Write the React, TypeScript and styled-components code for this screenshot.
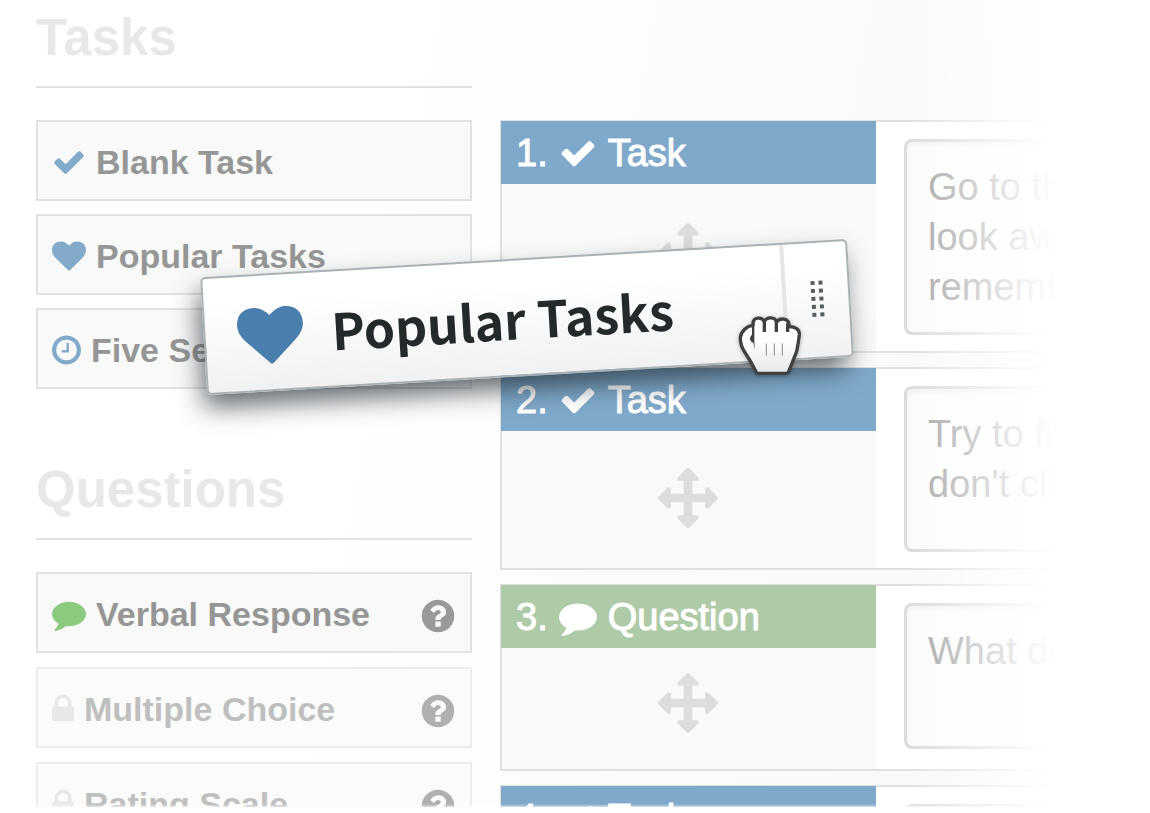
import React from "react";
import styled, { createGlobalStyle, css } from "styled-components";

const GlobalStyle = createGlobalStyle`
  *, *::before, *::after { box-sizing: border-box; }
  body {
    margin: 0;
    background: #fff;
    font-family: "Liberation Sans", Arial, Helvetica, sans-serif;
  }
  button, textarea { font: inherit; margin: 0; }
`;

/* ---------- icons ---------- */

type Glyph = { box: string; ratio: number; d: string };

const glyphs = {
  check: {
    box: "0 0 1792 1792",
    ratio: 1,
    d: "M1671 566q0 40-28 68l-724 724-136 136q-28 28-68 28t-68-28l-136-136-362-362q-28-28-28-68t28-68l136-136q28-28 68-28t68 28l294 295 656-657q28-28 68-28t68 28l136 136q28 28 28 68z",
  },
  heart: {
    box: "0 0 1792 1792",
    ratio: 1,
    d: "M896 1664q-26 0-44-18l-624-602q-10-8-27.5-26t-55.5-65.5-68-97.5-53.5-121-23.5-138q0-220 127-344t351-124q62 0 126.5 21.5t120 58 95.5 68.5 76 68q36-36 76-68t95.5-68.5 120-58 126.5-21.5q224 0 351 124t127 344q0 221-229 450l-623 600q-18 18-44 18z",
  },
  clock: {
    box: "128 0 1536 1792",
    ratio: 0.857,
    d: "M1024 544v448q0 14-9 23t-23 9h-320q-14 0-23-9t-9-23v-64q0-14 9-23t23-9h224v-352q0-14 9-23t23-9h64q14 0 23 9t9 23zm416 352q0-148-73-273t-198-198-273-73-273 73-198 198-73 273 73 273 198 198 273 73 273-73 198-198 73-273zm224 0q0 209-103 385.5t-279.5 279.5-385.5 103-385.5-103-279.5-279.5-103-385.5 103-385.5 279.5-279.5 385.5-103 385.5 103 279.5 279.5 103 385.5z",
  },
  comment: {
    box: "0 0 1792 1792",
    ratio: 1,
    d: "M1792 896q0 174-120 321.5t-326 233-450 85.5q-70 0-145-8-198 175-460 242-49 14-114 22-17 2-30.5-9t-17.5-29v-1q-3-4-.5-12t2-10 4.5-9.5l6-9 7-8.5 8-9q7-8 31-34.5t34.5-38 31-39.5 32.5-51 27-59 26-76q-157-89-247.5-220t-90.5-281q0-130 71-248.5t191-204.5 286-136.5 348-50.5q244 0 450 85.5t326 233 120 321.5z",
  },
  lock: {
    box: "320 0 1152 1792",
    ratio: 0.643,
    d: "M640 768h512v-192q0-106-75-181t-181-75-181 75-75 181v192zm832 96v576q0 40-28 68t-68 28h-960q-40 0-68-28t-28-68v-576q0-40 28-68t68-28h32v-192q0-184 132-316t316-132 316 132 132 316v192h32q40 0 68 28t28 68z",
  },
  help: {
    box: "0 0 1792 1792",
    ratio: 1,
    d: "M1024 1376v-192q0-14-9-23t-23-9h-192q-14 0-23 9t-9 23v192q0 14 9 23t23 9h192q14 0 23-9t9-23zm256-672q0-88-55.5-163t-138.5-116-170-41q-243 0-371 213-15 24 8 42l132 100q7 6 19 6 16 0 25-12 53-68 86-92 34-24 86-24 48 0 85.5 26t37.5 59q0 38-20 61t-68 45q-63 28-115.5 86.5t-52.5 125.5v36q0 14 9 23t23 9h192q14 0 23-9t9-23q0-19 21.5-49.5t54.5-49.5q32-18 49-28.5t46-35 44.5-48 28-60.5 12.5-81zm384 192q0 209-103 385.5t-279.5 279.5-385.5 103-385.5-103-279.5-279.5-103-385.5 103-385.5 279.5-279.5 385.5-103 385.5 103 279.5 279.5 103 385.5z",
  },
  move: {
    box: "0 0 1792 1792",
    ratio: 1,
    d: "M1792 896q0 26-19 45l-256 256q-19 19-45 19t-45-19-19-45v-128h-384v384h128q26 0 45 19t19 45-19 45l-256 256q-19 19-45 19t-45-19l-256-256q-19-19-19-45t19-45 45-19h128v-384h-384v128q0 26-19 45t-45 19-45-19l-256-256q-19-19-19-45t19-45l256-256q19-19 45-19t45 19 19 45v128h384v-384h-128q-26 0-45-19t-19-45 19-45l256-256q19-19 45-19t45 19l256 256q19 19 19 45t-19 45-45 19h-128v384h384v-128q0-26 19-45t45-19 45 19l256 256q19 19 19 45z",
  },
} satisfies Record<string, Glyph>;

type IconName = keyof typeof glyphs;

const IconSvg = styled.svg`
  display: block;
  flex: none;
  fill: currentColor;
`;

function Icon({ name, size }: { name: IconName; size: number }) {
  const g = glyphs[name];
  return (
    <IconSvg viewBox={g.box} width={Math.round(size * g.ratio)} height={size} aria-hidden="true">
      <path d={g.d} />
    </IconSvg>
  );
}

/* ---------- page ---------- */

const Stage = styled.main`
  position: relative;
  height: calc(100vh - 6px);
  overflow: hidden;
  background: linear-gradient(100deg, #fff 30%, #f8f8f8 88%);
`;

const Columns = styled.div`
  display: grid;
  grid-template-columns: 436px 1fr;
  gap: 28px;
  padding-left: 36px;
`;

const Fade = styled.div`
  position: absolute;
  inset: 0;
  pointer-events: none;
  background:
    linear-gradient(to top, rgba(255, 255, 255, 0.6), transparent 3px),
    linear-gradient(
      to right,
      transparent 79%,
      rgba(255, 255, 255, 0.6) 86%,
      rgba(255, 255, 255, 0.9) 90%,
      #fff 92%
    );
`;

/* ---------- sidebar ---------- */

const Sidebar = styled.aside`
  display: flex;
  flex-direction: column;
  gap: 71px;
  padding-top: 8px;
`;

const Heading = styled.h2`
  margin: 0 0 32px;
  padding-bottom: 18px;
  border-bottom: 2px solid #e2e2e2;
  font-size: 51px;
  line-height: 60px;
  font-weight: 700;
  color: #e8e8e8;
`;

const ItemList = styled.ul<{ $gap: number }>`
  display: flex;
  flex-direction: column;
  gap: ${(p) => p.$gap}px;
  margin: 0;
  padding: 0;
  list-style: none;
`;

const Item = styled.li<{ $locked?: boolean }>`
  display: flex;
  align-items: center;
  height: 81px;
  padding: 3px 13px 0 14px;
  border: 2px solid #e2e2e2;
  background: #f9f9f9;
  color: #969696;
  ${(p) =>
    p.$locked &&
    css`
      border-color: #ececec;
      background: #fbfbfb;
      color: #bfbfbf;
    `}
`;

const ItemButton = styled.button<{ $tint: string }>`
  flex: 1;
  display: flex;
  align-items: center;
  gap: 10px;
  padding: 0;
  border: 0;
  background: none;
  color: inherit;
  font-size: 34px;
  line-height: 40px;
  font-weight: 700;
  white-space: nowrap;
  text-align: left;
  svg { color: ${(p) => p.$tint}; }
`;

const HelpButton = styled.button<{ $locked?: boolean }>`
  padding: 4px 0 0;
  border: 0;
  background: none;
  color: ${(p) => (p.$locked ? "#b0b0b0" : "#999")};
`;

type Entry = { label: string; icon: IconName; tint: string; locked?: boolean; help?: boolean };

const taskEntries: Entry[] = [
  { label: "Blank Task", icon: "check", tint: "#82aac9" },
  { label: "Popular Tasks", icon: "heart", tint: "#82aac9" },
  { label: "Five Second Test", icon: "clock", tint: "#82aac9" },
];

const questionEntries: Entry[] = [
  { label: "Verbal Response", icon: "comment", tint: "#8bca7f", help: true },
  { label: "Multiple Choice", icon: "lock", tint: "#e8e8e8", help: true, locked: true },
  { label: "Rating Scale", icon: "lock", tint: "#e8e8e8", help: true, locked: true },
];

function Palette({ title, entries, gap }: { title: string; entries: Entry[]; gap: number }) {
  return (
    <section>
      <Heading>{title}</Heading>
      <ItemList $gap={gap}>
        {entries.map((e) => (
          <Item key={e.label} $locked={e.locked}>
            <ItemButton type="button" $tint={e.tint}>
              <Icon name={e.icon} size={34} />
              {e.label}
            </ItemButton>
            {e.help && (
              <HelpButton type="button" $locked={e.locked} aria-label={`About ${e.label}`}>
                <Icon name="help" size={38} />
              </HelpButton>
            )}
          </Item>
        ))}
      </ItemList>
    </section>
  );
}

/* ---------- timeline ---------- */

const Timeline = styled.section`
  display: flex;
  flex-direction: column;
  gap: 14px;
  padding-top: 120px;
  min-width: 0;
`;

const Card = styled.article`
  display: flex;
  min-height: 187px;
  border: 2px solid #e0e0e0;
  border-right: 0;
  background: #fff;
`;

const CardSide = styled.div`
  flex: none;
  display: flex;
  flex-direction: column;
  width: 374px;
  margin-top: -1px;
  background: #f9f9f9;
`;

const CardHeader = styled.h3<{ $tone: string }>`
  display: flex;
  align-items: center;
  gap: 11px;
  height: 63px;
  margin: 0 0 0 -1px;
  padding: 0 15px;
  background: ${(p) => p.$tone};
  color: #fff;
  font-size: 38px;
  line-height: 44px;
  font-weight: 400;
  -webkit-text-stroke: 1px currentColor;
`;

const MoveHandle = styled.button<{ $inset: number }>`
  display: flex;
  justify-content: center;
  align-items: flex-start;
  flex: 1;
  padding: ${(p) => p.$inset}px 2px 0 0;
  border: 0;
  background: none;
  color: #ddd;
`;

const CardMain = styled.div`
  flex: 1;
  min-width: 0;
  padding: 17px 0 16px 28px;
`;

const Prompt = styled.textarea<{ $height: number }>`
  display: block;
  width: 100%;
  height: ${(p) => p.$height}px;
  padding: 20px 21px;
  border: 3px solid #dcdcdc;
  border-right: 0;
  border-radius: 8px 0 0 8px;
  outline: 0;
  background: #fcfcfc;
  box-shadow: inset 0 3px 6px rgba(0, 0, 0, 0.05);
  color: #a6a6a6;
  font-size: 38px;
  line-height: 50px;
  resize: none;
  overflow: hidden;
`;

type Step = { kind: "Task" | "Question"; text: string; height: number; inset: number };

const steps: Step[] = [
  { kind: "Task", text: "Go to th\nlook aw\nrememb", height: 196, inset: 39 },
  { kind: "Task", text: "Try to fin\ndon't clic", height: 166, inset: 37 },
  { kind: "Question", text: "What do", height: 146, inset: 25 },
  { kind: "Task", text: "", height: 146, inset: 25 },
];

function StepCard({ step, index }: { step: Step; index: number }) {
  const isTask = step.kind === "Task";
  return (
    <Card>
      <CardSide>
        <CardHeader $tone={isTask ? "#7fa9ca" : "#afcaa7"}>
          <span>{index}.</span>
          <Icon name={isTask ? "check" : "comment"} size={38} />
          <span>{step.kind}</span>
        </CardHeader>
        <MoveHandle type="button" $inset={step.inset} aria-label={`Move step ${index}`}>
          <Icon name="move" size={60} />
        </MoveHandle>
      </CardSide>
      <CardMain>
        <Prompt
          $height={step.height}
          defaultValue={step.text}
          spellCheck={false}
          aria-label={`Step ${index} text`}
        />
      </CardMain>
    </Card>
  );
}

/* ---------- dragged item ---------- */

const Dragged = styled.div`
  position: absolute;
  left: 203px;
  top: 258px;
  display: flex;
  width: 648px;
  height: 118px;
  border: 2px solid #a9b1b5;
  border-radius: 5px;
  background: linear-gradient(#fff 20%, #f1f1f1);
  box-shadow: -5px 14px 26px -2px rgba(30, 40, 48, 0.7);
  transform: rotate(-3.4deg);
`;

const DraggedLabel = styled.div`
  flex: 1;
  display: flex;
  align-items: flex-start;
  gap: 28px;
  padding: 27px 0 0 32px;
  color: #24292c;
  font-family: "Noto Sans CJK SC", "Noto Sans", sans-serif;
  font-size: 50px;
  line-height: 60px;
  font-weight: 700;
  white-space: nowrap;
  svg { color: #4a7eac; }
`;

const Grip = styled.div`
  display: grid;
  grid-template-columns: 4px 4px;
  grid-auto-rows: 4px;
  gap: 4px;
  place-content: center;
  width: 66px;
  padding-bottom: 2px;
  border-left: 4px solid #e3e5e6;
`;

const Dot = styled.span`
  background: #565c60;
`;

const Hand = styled.svg`
  position: absolute;
  left: 738px;
  top: 315px;
  filter: drop-shadow(0 1px 2px rgba(0, 0, 0, 0.3));
`;

function GrabbingHand() {
  return (
    <Hand viewBox="174 315 192 183" width="64" height="61" aria-hidden="true">
      <defs>
        <linearGradient id="palm" x1="0" y1="0" x2="0" y2="1">
          <stop offset="0.4" stopColor="#fff" />
          <stop offset="1" stopColor="#e6e6e6" />
        </linearGradient>
      </defs>
      <path
        d="M229 487 Q231 490 236 490 H318 Q324 490 326 485 L350 424 C353 410 356 392 358 374 C359 358 346 350 327 350 V343 C325 325 300 322 290 336 C286 320 260 319 253 335 C246 319 220 321 219 340 V346 C200 347 182 366 181 384 C181 400 186 414 194 426 C208 447 220 468 229 487 Z"
        fill="url(#palm)"
        stroke="#404040"
        strokeWidth="10"
        strokeLinejoin="round"
      />
      <path d="M253 332V366M289 332V366M323 340V366" stroke="#404040" strokeWidth="10" fill="none" />
      <path d="M216 338H223V392L224 420L220 398C208 394 207 382 216 374Z" fill="#404040" />
      <path d="M259 400V437M283 400V437M307 400V437" stroke="#555" strokeWidth="2" fill="none" />
    </Hand>
  );
}

export default function App() {
  return (
    <>
      <GlobalStyle />
      <Stage>
        <Columns>
          <Sidebar>
            <Palette title="Tasks" entries={taskEntries} gap={13} />
            <Palette title="Questions" entries={questionEntries} gap={14} />
          </Sidebar>
          <Timeline>
            {steps.map((s, i) => (
              <StepCard key={i} step={s} index={i + 1} />
            ))}
          </Timeline>
        </Columns>
        <Fade />
        <Dragged>
          <DraggedLabel>
            <Icon name="heart" size={66} />
            Popular Tasks
          </DraggedLabel>
          <Grip>
            {Array.from({ length: 10 }, (_, i) => (
              <Dot key={i} />
            ))}
          </Grip>
        </Dragged>
        <GrabbingHand />
      </Stage>
    </>
  );
}
